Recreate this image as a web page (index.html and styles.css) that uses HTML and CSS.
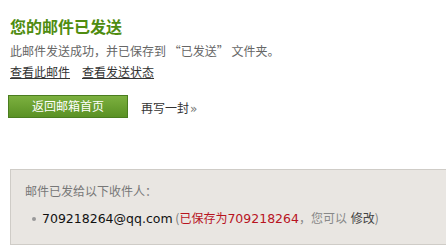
FILE: index.html
```html
<!DOCTYPE html>
<html lang="zh-CN">
<head>
<meta charset="utf-8">
<link rel="stylesheet" href="styles.css">
</head>
<body>
<div class="page">
  <div class="result">
    <h1 class="title">您的邮件已发送</h1>
    <p class="desc">此邮件发送成功，并已保存到 “已发送” 文件夹。</p>
    <div class="links">
      <a class="link" href="#">查看此邮件</a>
      <a class="link" href="#">查看发送状态</a>
    </div>
    <div class="actions">
      <a class="btn" href="#">返回邮箱首页</a>
      <a class="again" href="#">再写一封<span class="raquo">»</span></a>
    </div>
  </div>
  <div class="recipients">
    <div class="rc-head">邮件已发给以下收件人：</div>
    <ul class="rc-list">
      <li class="rc-item"><span class="email">709218264@qq.com</span> <span class="paren">(</span><span class="saved">已保存为<span class="num">709218264</span></span><span class="muted">，您可以 </span><a class="edit" href="#">修改</a><span class="paren">)</span></li>
    </ul>
  </div>
</div>
</body>
</html>
```
FILE: styles.css
```css
html, body {
  margin: 0;
  padding: 0;
  background: #ffffff;
}
body {
  font-family: "Noto Sans CJK SC", "DejaVu Sans", sans-serif;
  font-size: 12px;
  color: #333;
}
.page {
  padding: 14px 0 0 10px;
}
.title {
  margin: 0;
  font-size: 16px;
  line-height: 24px;
  font-weight: bold;
  color: #4f8c10;
}
.desc {
  margin: 4px 0 0;
  font-size: 12px;
  line-height: 18px;
  color: #666;
}
.links {
  display: flex;
  gap: 12px;
  margin-top: 3px;
  line-height: 18px;
}
.link {
  color: #333;
  text-decoration: underline;
}
.actions {
  display: flex;
  align-items: center;
  margin-top: 14px;
  gap: 13px;
}
.btn {
  display: block;
  width: 118px;
  height: 21px;
  line-height: 20px;
  text-align: center;
  color: #fff;
  text-decoration: none;
  border: 1px solid #4a7d1f;
  background: linear-gradient(#7cb03f, #5a9124);
  font-size: 12px;
  margin-left: -2px;
}
.again {
  color: #333;
  text-decoration: none;
  font-size: 12px;
  margin-top: 2px;
}
.raquo {
  color: #777;
  font-family: "DejaVu Sans", sans-serif;
  font-size: 12px;
  margin-left: 1px;
}
.recipients {
  margin-top: 51px;
  background: #e9e6e2;
  border: 1px solid #cfccc7;
  border-right: none;
  padding: 11px 0 15px 14px;
}
.rc-head {
  color: #777;
  line-height: 20px;
}
.rc-list {
  list-style: none;
  margin: 7px 0 0;
  padding: 0 0 0 7px;
}
.rc-item {
  position: relative;
  padding-left: 10px;
  line-height: 20px;
  color: #777;
}
.rc-item::before {
  content: "";
  position: absolute;
  left: 0;
  top: 9px;
  width: 4px;
  height: 4px;
  border-radius: 50%;
  background: #999;
}
.email {
  font-family: "DejaVu Sans", sans-serif;
  font-size: 12.5px;
  color: #111;
}
.paren {
  color: #777;
}
.saved {
  color: #b8141f;
}
.num {
  font-family: "DejaVu Sans", sans-serif;
  font-size: 12.5px;
}
.muted {
  color: #888;
  margin-right: 1px;
}
.edit {
  color: #444;
  text-decoration: none;
}
```
